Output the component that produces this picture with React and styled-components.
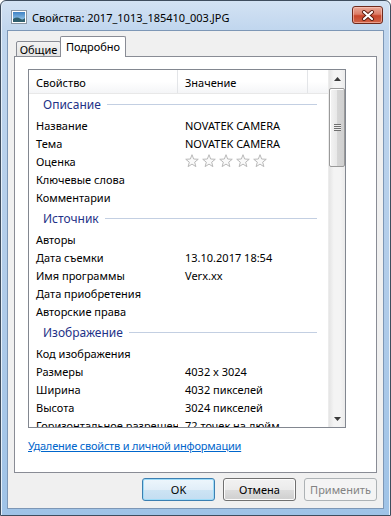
import React from 'react';
import styled, { createGlobalStyle } from 'styled-components';

const GlobalStyle = createGlobalStyle`
  body {
    margin: 0;
    font-family: "Segoe UI", "Noto Sans", sans-serif;
    font-size: 11px;
    color: #000;
    background: #fff;
  }
`;

const Window = styled.div`
  width: 391px;
  height: 516px;
  box-sizing: border-box;
  border: 1px solid #3f4d5e;
  border-radius: 6px 6px 0 0;
  padding: 0 6px 6px;
  display: flex;
  flex-direction: column;
  background: linear-gradient(to bottom, #d3e2f3 0px, #c0d6ee 30px, #afcbe9 60%, #9fc3e7 100%);
  box-shadow: inset 1px 0 0 #e6f0fa, inset -1px 0 0 #e6f0fa;
`;

const TitleBar = styled.div`
  height: 29px;
  display: flex;
  align-items: center;
  padding: 0 0 0 4px;
`;

const TitleIcon = styled.svg`
  width: 16px;
  height: 14px;
  margin: 2px 5px 0 0;
  flex: none;
`;

const TitleText = styled.div`
  flex: 1;
  font-size: 11px;
  padding-top: 3px;
  color: #000;
  white-space: nowrap;
`;

const CloseButton = styled.div`
  width: 31px;
  height: 18px;
  margin: -1px 1px 0 0;
  box-sizing: border-box;
  border: 1px solid #6e2a1d;
  border-radius: 3px;
  background: linear-gradient(to bottom, #e9a99a 0%, #dc7c66 45%, #c8452a 55%, #d0654a 100%);
  box-shadow: inset 0 0 0 1px rgba(255, 210, 200, 0.55);
  display: flex;
  align-items: center;
  justify-content: center;
`;

const Client = styled.div`
  flex: 1;
  border: 1px solid #7d97b6;
  background: #f0f0f0;
  padding: 6px;
  display: flex;
  flex-direction: column;
`;

const TabRow = styled.div`
  height: 20px;
  display: flex;
  align-items: flex-end;
  padding-left: 2px;
  margin-bottom: -1px;
`;

const Tab = styled.div`
  box-sizing: border-box;
  height: ${p => (p.$active ? '21px' : '16px')};
  width: ${p => (p.$active ? '66px' : '45px')};
  padding-top: ${p => (p.$active ? '2px' : '0')};
  margin-left: ${p => (p.$active ? '-1px' : '0')};
  border: 1px solid #898c95;
  border-bottom: ${p => (p.$active ? 'none' : '1px solid #898c95')};
  border-radius: 2px 2px 0 0;
  background: ${p => (p.$active ? '#fff' : 'linear-gradient(to bottom, #f3f3f3, #e4e4e4)')};
  position: relative;
  z-index: ${p => (p.$active ? 2 : 1)};
  line-height: 15px;
  text-align: center;
  white-space: nowrap;
`;

const Panel = styled.div`
  height: 417px;
  box-sizing: border-box;
  border: 1px solid #898c95;
  background: #fff;
  padding: 12px 30px 0 13px;
  display: flex;
  flex-direction: column;
`;

const ListBox = styled.div`
  height: 359px;
  flex: none;
  box-sizing: border-box;
  border: 1px solid #828790;
  display: flex;
  overflow: hidden;
`;

const ListContent = styled.div`
  flex: 1;
  overflow: hidden;
  display: flex;
  flex-direction: column;
`;

const Header = styled.div`
  height: 24px;
  flex: none;
  display: flex;
  background: linear-gradient(to bottom, #ffffff 0%, #ffffff 50%, #f4f5f7 100%);
  border-bottom: 1px solid #e8e8e8;
  box-sizing: border-box;
`;

const HeaderCell = styled.div`
  width: ${p => p.$w};
  box-sizing: border-box;
  padding: 5px 0 0 7px;
  line-height: 16px;
  border-right: 1px solid #e3e5e8;
  white-space: nowrap;
`;

const Group = styled.div`
  height: 22px;
  margin-top: ${p => (p.$first ? '0' : '2px')};
  flex: none;
  display: flex;
  align-items: center;
  padding: 0 11px 2px 14px;
  box-sizing: border-box;
  color: #1e3287;
  font-size: 12px;
`;

const GroupLine = styled.div`
  flex: 1;
  height: 1px;
  margin: 1px 0 0 6px;
  background: #c3cfe2;
`;

const Row = styled.div`
  height: 18px;
  flex: none;
  display: flex;
  align-items: center;
  white-space: nowrap;
`;

const NameCell = styled.div`
  width: 149px;
  box-sizing: border-box;
  padding-left: 7px;
  overflow: hidden;
`;

const ValueCell = styled.div`
  padding-left: 7px;
  display: flex;
  gap: 3px;
`;

const Scrollbar = styled.div`
  width: 17px;
  flex: none;
  display: flex;
  flex-direction: column;
  background: linear-gradient(to right, #e4e4e4, #f4f4f4 30%, #f4f4f4 70%, #ebebeb);
  border-left: 1px solid #ececec;
  box-sizing: border-box;
`;

const ArrowBox = styled.div`
  height: 17px;
  flex: none;
  display: flex;
  align-items: center;
  justify-content: center;
`;

const Thumb = styled.div`
  height: 79px;
  margin-top: 1px;
  box-sizing: border-box;
  border: 1px solid #9a9a9a;
  border-radius: 2px;
  background: linear-gradient(to right, #f4f4f4 0%, #e8e8e8 50%, #d6d6d6 51%, #d0d0d0 100%);
  box-shadow: inset 1px 1px 0 #fff;
  display: flex;
  align-items: center;
  justify-content: center;
`;

const Grip = styled.div`
  width: 7px;
  height: 7px;
  background: repeating-linear-gradient(to bottom, #707070 0, #707070 1px, #eeeeee 1px, #eeeeee 2px);
`;

const Track = styled.div`
  flex: 1;
`;

const Link = styled.a`
  margin-top: 10px;
  color: #0066cc;
  text-decoration: underline;
  line-height: 15px;
  letter-spacing: -0.2px;
  cursor: pointer;
`;

const ButtonRow = styled.div`
  margin-top: 5px;
  display: flex;
  justify-content: flex-end;
  gap: 8px;
`;

const Button = styled.div`
  width: 73px;
  height: 23px;
  box-sizing: border-box;
  border-radius: 3px;
  display: flex;
  align-items: center;
  justify-content: center;
  border: 1px solid ${p => (p.$primary ? '#3c7fb1' : p.$disabled ? '#adb2b5' : '#707070')};
  color: ${p => (p.$disabled ? '#838383' : '#000')};
  background: ${p =>
    p.$primary
      ? 'linear-gradient(to bottom, #edf6fc 0%, #e1eef8 50%, #cde4f4 51%, #c3ddf1 100%)'
      : p.$disabled
      ? '#f4f4f4'
      : 'linear-gradient(to bottom, #f2f2f2 0%, #ebebeb 50%, #dddddd 51%, #cfcfcf 100%)'};
  box-shadow: ${p =>
    p.$primary ? 'inset 0 0 0 1px #9edcf8' : p.$disabled ? 'none' : 'inset 0 0 0 1px #fcfcfc'};
`;

function Star() {
  return (
    <svg width="14" height="14" viewBox="0 0 14 14">
      <polygon
        points="7,0.7 8.65,5.03 13.28,5.26 9.66,8.17 10.88,12.64 7,10.1 3.12,12.64 4.34,8.17 0.72,5.26 5.35,5.03"
        fill="#fafafa"
        stroke="#b9b9b9"
        strokeWidth="1"
        strokeLinejoin="round"
      />
    </svg>
  );
}

const groups = [
  {
    title: 'Описание',
    rows: [
      ['Название', 'NOVATEK CAMERA'],
      ['Тема', 'NOVATEK CAMERA'],
      ['Оценка', 'stars'],
      ['Ключевые слова', ''],
      ['Комментарии', ''],
    ],
  },
  {
    title: 'Источник',
    rows: [
      ['Авторы', ''],
      ['Дата съемки', '13.10.2017 18:54'],
      ['Имя программы', 'Verx.xx'],
      ['Дата приобретения', ''],
      ['Авторские права', ''],
    ],
  },
  {
    title: 'Изображение',
    rows: [
      ['Код изображения', ''],
      ['Размеры', '4032 x 3024'],
      ['Ширина', '4032 пикселей'],
      ['Высота', '3024 пикселей'],
      ['Горизонтальное разрешение', '72 точек на дюйм'],
    ],
  },
];

export default function App() {
  return (
    <>
      <GlobalStyle />
      <Window>
        <TitleBar>
          <TitleIcon viewBox="0 0 16 14">
            <defs>
              <linearGradient id="sky" x1="0" y1="0" x2="0" y2="1">
                <stop offset="0" stopColor="#3f82c4" />
                <stop offset="1" stopColor="#a9d6f2" />
              </linearGradient>
            </defs>
            <rect x="0.5" y="0.5" width="15" height="13" fill="#fff" stroke="#8a96a3" />
            <rect x="2" y="2" width="12" height="10" fill="url(#sky)" />
            <path d="M2 9 Q6 6.5 9 8.5 T14 8 V12 H2 Z" fill="#2f5f6e" />
          </TitleIcon>
          <TitleText>Свойства: 2017_1013_185410_003.JPG</TitleText>
          <CloseButton>
            <svg width="14" height="11" viewBox="0 0 14 11">
              <path d="M3 2 L11 9 M11 2 L3 9" stroke="#5a1a0e" strokeWidth="4" strokeLinecap="round" />
              <path d="M3 2 L11 9 M11 2 L3 9" stroke="#fff" strokeWidth="2.2" strokeLinecap="round" />
            </svg>
          </CloseButton>
        </TitleBar>
        <Client>
          <TabRow>
            <Tab>Общие</Tab>
            <Tab $active>Подробно</Tab>
          </TabRow>
          <Panel>
            <ListBox>
              <ListContent>
                <Header>
                  <HeaderCell $w="149px">Свойство</HeaderCell>
                  <HeaderCell $w="130px">Значение</HeaderCell>
                </Header>
                {groups.map((g, gi) => (
                  <React.Fragment key={g.title}>
                    <Group $first={gi === 0}>
                      {g.title}
                      <GroupLine />
                    </Group>
                    {g.rows.map(([name, value]) => (
                      <Row key={name}>
                        <NameCell>{name}</NameCell>
                        <ValueCell>
                          {value === 'stars'
                            ? [0, 1, 2, 3, 4].map(i => <Star key={i} />)
                            : value}
                        </ValueCell>
                      </Row>
                    ))}
                  </React.Fragment>
                ))}
              </ListContent>
              <Scrollbar>
                <ArrowBox>
                  <svg width="7" height="4" viewBox="0 0 7 4">
                    <path d="M0 4 L3.5 0 L7 4 Z" fill="#3a3a3a" />
                  </svg>
                </ArrowBox>
                <Thumb>
                  <Grip />
                </Thumb>
                <Track />
                <ArrowBox>
                  <svg width="7" height="4" viewBox="0 0 7 4">
                    <path d="M0 0 L3.5 4 L7 0 Z" fill="#3a3a3a" />
                  </svg>
                </ArrowBox>
              </Scrollbar>
            </ListBox>
            <Link>Удаление свойств и личной информации</Link>
          </Panel>
          <ButtonRow>
            <Button $primary>OK</Button>
            <Button>Отмена</Button>
            <Button $disabled>Применить</Button>
          </ButtonRow>
        </Client>
      </Window>
    </>
  );
}
